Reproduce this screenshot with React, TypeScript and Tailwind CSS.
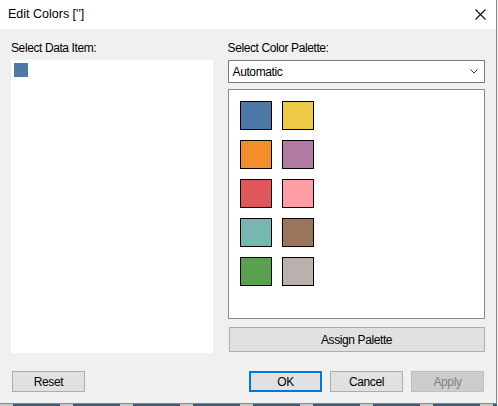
const swatches = [
    ['#4e79a7', '#edc948'],
    ['#f28e2b', '#b07aa1'],
    ['#e15759', '#ff9da7'],
    ['#76b7b2', '#9c755f'],
    ['#59a14f', '#bab0ac'],
];

const font = { fontFamily: '"Liberation Sans", Arial, sans-serif' };

export default function App() {
    return (
        <div
            className="w-[498px] h-[406px] overflow-hidden flex flex-col bg-[#f0f0f0] text-[12px] tracking-[-0.4px] text-black"
            style={font}
        >
            <div className="flex flex-1 flex-col border-r border-[#8a8a8a] w-[497px]">
                {/* title bar */}
                <div className="flex h-[29px] items-center justify-between bg-white pl-[8px] pr-[10px]">
                    <span className="text-[12.5px] tracking-normal">Edit Colors ['']</span>
                    <svg width="11" height="11" viewBox="0 0 11 11" className="mr-[0px]">
                        <path d="M0.5 0.5 L10.5 10.5 M10.5 0.5 L0.5 10.5" stroke="#111" strokeWidth="1.1" fill="none" />
                    </svg>
                </div>

                {/* body */}
                <div className="flex flex-1 flex-col px-[11px] pt-[11px]">
                    <div className="flex gap-[15px]">
                        <div className="flex w-[202px] flex-col">
                            <label className="h-[20px] leading-[17px]">Select Data Item:</label>
                            <div className="h-[293px] bg-white p-[3px]">
                                <div className="w-[14px] h-[14px] bg-[#4e79a7]" />
                            </div>
                        </div>
                        <div className="flex w-[258px] flex-col">
                            <label className="h-[20px] leading-[17px]">Select Color Palette:</label>
                            <div className="flex h-[23px] items-center justify-between border border-[#7a7a7a] bg-white pl-[4px] pr-[6px]">
                                <span>Automatic</span>
                                <svg width="8" height="5" viewBox="0 0 8 5">
                                    <path d="M0.5 0.5 L4 4 L7.5 0.5" stroke="#333" strokeWidth="1" fill="none" />
                                </svg>
                            </div>
                            <div className="mt-[6px] h-[230px] border border-[#8a8a8a] bg-white pl-[11px] pt-[11px]">
                                <div className="flex flex-col gap-[10px]">
                                    {swatches.map((row, i) => (
                                        <div key={i} className="flex gap-[10px]">
                                            {row.map((c) => (
                                                <div
                                                    key={c}
                                                    className="w-[32px] h-[29px] border-[1.5px] border-black"
                                                    style={{ backgroundColor: c }}
                                                />
                                            ))}
                                        </div>
                                    ))}
                                </div>
                            </div>
                            <button className="mt-[8px] h-[25px] w-[256px] self-start ml-[1px] border border-[#adadad] bg-[#e1e1e1]">
                                Assign Palette
                            </button>
                        </div>
                    </div>

                    {/* footer buttons */}
                    <div className="mt-[18px] flex items-center">
                        <button className="ml-[1px] h-[21px] w-[73px] border border-[#adadad] bg-[#e1e1e1]">
                            Reset
                        </button>
                        <div className="ml-auto mr-[1px] flex gap-[8px]">
                            <button className="h-[21px] w-[73px] border-2 border-[#0078d7] bg-[#e1e1e1]">
                                OK
                            </button>
                            <button className="h-[21px] w-[73px] border border-[#adadad] bg-[#e1e1e1]">
                                Cancel
                            </button>
                            <button className="h-[21px] w-[73px] border border-[#bfbfbf] bg-[#cccccc] text-[#838383]">
                                Apply
                            </button>
                        </div>
                    </div>
                </div>
            </div>
            {/* window bottom edge */}
            <div className="h-[1px] w-[497px] bg-[#8a8a8a]" />
            <div className="flex h-[2px] w-[497px] overflow-hidden">
                {Array.from({ length: 9 }).map((_, i) => (
                    <div key={i} className="flex shrink-0">
                        <div className="w-[13px] bg-[#c8c8c8]" />
                        <div className="w-[47px] bg-[#3f5a78]" />
                    </div>
                ))}
            </div>
        </div>
    );
}
